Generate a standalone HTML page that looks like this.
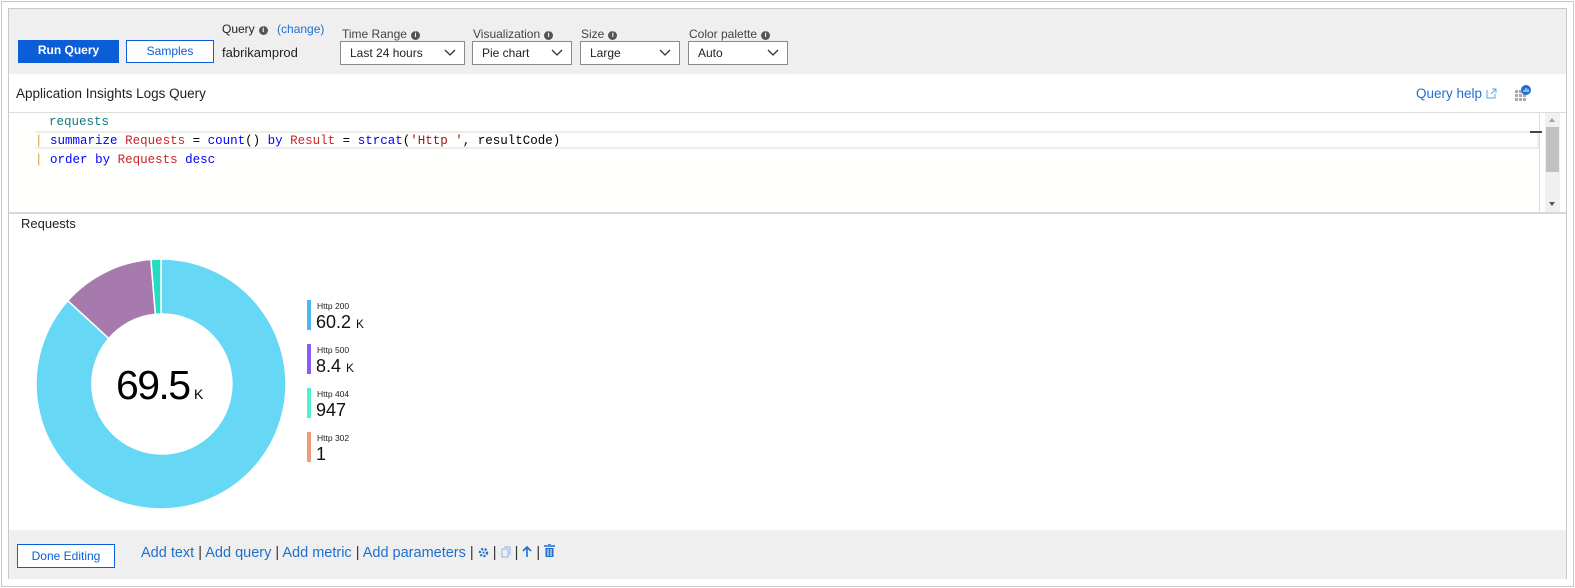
<!DOCTYPE html>
<html><head><meta charset="utf-8"><style>
*{box-sizing:border-box;margin:0;padding:0}
body{width:1575px;height:588px;background:#fff;font-family:"Liberation Sans",sans-serif;position:relative;overflow:hidden}
.frame{position:absolute;left:1px;top:1px;width:1573px;height:586px;border:1px solid #c8c8c8}
.panel{position:absolute;left:8px;top:8px;width:1559px;height:571px;border:1px solid #c8c8c8;background:#fff}
.tb{position:absolute;left:0;top:0;width:100%;height:65px;background:#efefef}
.abs{position:absolute}
.btn{position:absolute;font-size:12px;text-align:center;line-height:21px;font-weight:bold}
.lbl{position:absolute;font-size:12px;color:#444;white-space:nowrap}
.i{display:inline-block;width:9px;height:9px;border-radius:50%;background:#555;color:#fff;font-size:7px;line-height:9px;text-align:center;font-weight:bold;vertical-align:1px;margin-left:4px}
.sel{position:absolute;top:32px;height:24px;border:1px solid #8a8a8a;background:#fff;font-size:12px;padding-left:9px;line-height:22px;color:#222}
.sel svg{position:absolute;right:8px;top:7px}
.code{font-family:"Liberation Mono",monospace;font-size:12.5px;position:absolute;left:40px;white-space:pre}
.lg{position:absolute;left:298px;width:100px}
.lg .bar{position:absolute;left:0;top:0;width:4px;height:30px}
.lg .t{position:absolute;left:10px;top:1px;font-size:8.5px;color:#222;white-space:nowrap}
.lg .v{position:absolute;left:9px;top:12px;font-size:18px;color:#111;white-space:nowrap}
.ft{position:absolute;left:0;top:521px;width:100%;height:49px;background:#efefef}
.lk{color:#1f6fcf}
</style></head><body>
<div class="frame"></div>
<div class="panel">
 <div class="tb">
  <div class="btn" style="left:9px;top:31px;width:101px;height:23px;background:#0b5ed7;color:#fff">Run Query</div>
  <div class="btn" style="left:117px;top:31px;width:88px;height:23px;border:1px solid #0b5ed7;background:#fff;color:#0b5ed7;font-weight:normal;line-height:21px">Samples</div>
  <div class="lbl" style="left:213px;top:13px;color:#222">Query<span class="i">i</span> <span style="color:#1f6fcf;margin-left:6px">(change)</span></div>
  <div class="lbl" style="left:213px;top:36px;font-size:13px;color:#222">fabrikamprod</div>
  <div class="lbl" style="left:333px;top:18px">Time Range<span class="i">i</span></div>
  <div class="lbl" style="left:464px;top:18px">Visualization<span class="i">i</span></div>
  <div class="lbl" style="left:572px;top:18px">Size<span class="i">i</span></div>
  <div class="lbl" style="left:680px;top:18px">Color palette<span class="i">i</span></div>
  <div class="sel" style="left:331px;width:125px">Last 24 hours<svg width="12" height="8"><path d="M1 1l5 5 5-5" stroke="#333" fill="none" stroke-width="1.3"/></svg></div>
  <div class="sel" style="left:463px;width:100px">Pie chart<svg width="12" height="8"><path d="M1 1l5 5 5-5" stroke="#333" fill="none" stroke-width="1.3"/></svg></div>
  <div class="sel" style="left:571px;width:100px">Large<svg width="12" height="8"><path d="M1 1l5 5 5-5" stroke="#333" fill="none" stroke-width="1.3"/></svg></div>
  <div class="sel" style="left:679px;width:100px">Auto<svg width="12" height="8"><path d="M1 1l5 5 5-5" stroke="#333" fill="none" stroke-width="1.3"/></svg></div>
 </div>
 <div class="abs" style="left:7px;top:77px;font-size:13.5px;color:#222">Application Insights Logs Query</div>
 <div class="abs" style="left:1407px;top:77px;font-size:13.5px;color:#1f6fcf;white-space:nowrap">Query help <svg width="11" height="11" style="vertical-align:-1px"><path d="M1 2v8h8V6M6 1h4v4M10 1L5 6" stroke="#5aa6e6" fill="none"/></svg></div>
 <svg class="abs" style="left:1505px;top:76px" width="18" height="16"><g fill="#aaa"><rect x="1" y="5" width="3" height="3"/><rect x="5" y="5" width="3" height="3"/><rect x="1" y="9" width="3" height="3"/><rect x="5" y="9" width="3" height="3"/><rect x="9" y="9" width="3" height="3"/><rect x="1" y="13" width="3" height="3"/><rect x="5" y="13" width="3" height="3"/><rect x="9" y="13" width="3" height="3"/></g><circle cx="12" cy="5" r="5" fill="#1f6fcf"/><path d="M10 7V5M12 7V3M14 7V4" stroke="#fff"/></svg>
 <div class="abs" style="left:0;top:103px;width:1557px;height:1px;background:#ddd"></div>
 <div class="abs" style="left:0;top:104px;width:1557px;height:99px;background:#fffffd"></div>
 <div class="abs" style="left:26px;top:122px;width:1504px;height:18px;border:2px solid #eee;border-left:none"></div>
 <div class="abs" style="left:1530px;top:104px;width:1px;height:99px;background:#ddd"></div>
 <div class="abs" style="left:1521px;top:122px;width:12px;height:2px;background:#444"></div>
 <div class="abs" style="left:1536px;top:104px;width:15px;height:99px;background:#f0f0f0"></div>
 <div class="abs" style="left:1537px;top:118px;width:13px;height:45px;background:#c1c1c1"></div>
 <svg class="abs" style="left:1538px;top:107px" width="10" height="92"><path d="M2 6l3-4 3 4z" fill="#a0a0a0"/><path d="M2 86l3 4 3-4z" fill="#555"/></svg>
 <div class="code" style="top:106px;color:#0e7c86">requests</div>
 <div class="code" style="top:125px;left:26px"><span style="color:#d8a23a">|</span> <span style="color:#0000ff">summarize</span> <span style="color:#c7252c">Requests</span> = <span style="color:#0000ff">count</span>() <span style="color:#0000ff">by</span> <span style="color:#c7252c">Result</span> = <span style="color:#0000ff">strcat</span>(<span style="color:#a31515">'Http '</span>, resultCode)</div>
 <div class="code" style="top:144px;left:26px"><span style="color:#d8a23a">|</span> <span style="color:#0000ff">order</span> <span style="color:#0000ff">by</span> <span style="color:#c7252c">Requests</span> <span style="color:#0000ff">desc</span></div>
 <div class="abs" style="left:0;top:203px;width:1557px;height:2px;background:#d8d8d8"></div>
 <div class="abs" style="left:12px;top:207px;font-size:13px;color:#222">Requests</div>
 <svg class="abs" style="left:-8px;top:-8px" width="300" height="530">
  <path d="M160 258A125 125 0 1 1 66.8 299.7L107.8 337.4A70 70 0 1 0 160 313Z" fill="#66d7f5" stroke="#fff" stroke-width="1.5"/>
  <path d="M66.8 299.7A125 125 0 0 1 149.9 258.4L154.4 313.2A70 70 0 0 0 107.8 337.4Z" fill="#a67aad" stroke="#fff" stroke-width="1.5"/>
  <path d="M149.9 258.4A125 125 0 0 1 160 258L160 313A70 70 0 0 0 154.4 313.2Z" fill="#23dcc2" stroke="#fff" stroke-width="1.5"/>
  <text x="115" y="398" font-family="Liberation Sans,sans-serif" font-size="41" fill="#000" textLength="75">69.5</text>
  <text x="193" y="398" font-family="Liberation Sans,sans-serif" font-size="14" fill="#000">K</text>
 </svg>
 <div class="lg" style="top:291px"><div class="bar" style="background:#4cb8f2"></div><div class="t">Http 200</div><div class="v">60.2 <span style="font-size:12px">K</span></div></div>
 <div class="lg" style="top:335px"><div class="bar" style="background:#8a5cf6"></div><div class="t">Http 500</div><div class="v">8.4 <span style="font-size:12px">K</span></div></div>
 <div class="lg" style="top:379px"><div class="bar" style="background:#4ff0d0"></div><div class="t">Http 404</div><div class="v">947</div></div>
 <div class="lg" style="top:423px"><div class="bar" style="background:#ef9a7a"></div><div class="t">Http 302</div><div class="v">1</div></div>
 <div class="ft">
  <div class="btn" style="left:8px;top:14px;width:98px;height:24px;border:1px solid #0b5ed7;background:#fff;color:#0b5ed7;font-weight:normal;line-height:22px">Done Editing</div>
  <div class="abs" style="left:132px;top:14px;font-size:14.5px;color:#333;white-space:nowrap"><span class="lk">Add text</span> | <span class="lk">Add query</span> | <span class="lk">Add metric</span> | <span class="lk">Add parameters</span> |
   <svg width="11" height="11" style="vertical-align:-1px"><circle cx="5.5" cy="5.5" r="3.5" fill="none" stroke="#1f6fcf" stroke-width="2.4" stroke-dasharray="2 1.5"/><circle cx="5.5" cy="5.5" r="1" fill="#1f6fcf"/></svg> |
   <svg width="10" height="12" style="vertical-align:-1px"><path d="M1 3h6v8H1z M3 1h6v8" fill="none" stroke="#8ab6e6"/></svg> |
   <svg width="10" height="13" style="vertical-align:-1px"><path d="M5 12V2M1 6l4-4 4 4" fill="none" stroke="#1f6fcf" stroke-width="1.6"/></svg> |
   <svg width="11" height="13" style="vertical-align:0"><path d="M0 2h11M4 0h3" stroke="#1f6fcf" stroke-width="1.5"/><path d="M1.5 4h8v9h-8z" fill="#1f6fcf"/><path d="M4 5v7M7 5v7" stroke="#fff"/></svg></div>
 </div>
</div>
</body></html>
